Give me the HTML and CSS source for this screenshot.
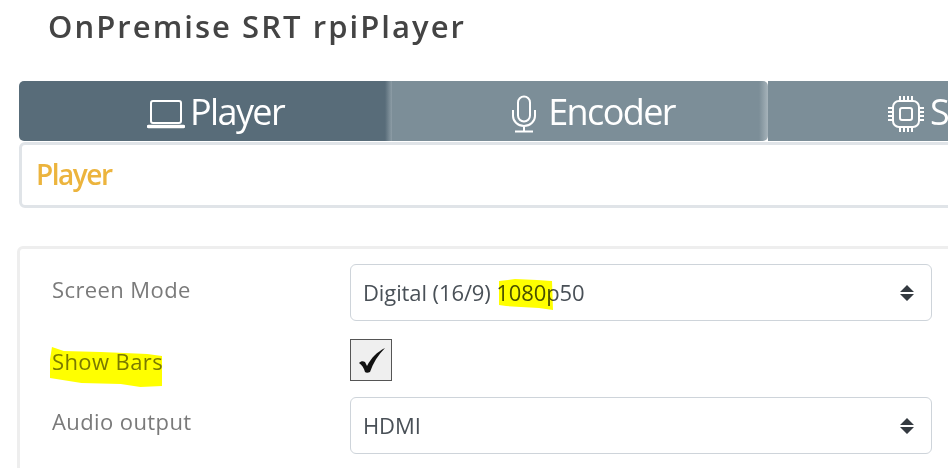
FILE: index.html

```html
<!DOCTYPE html>
<html lang="en">
<head>
    <meta charset="UTF-8">
    <title>OnPremise SRT rpiPlayer</title>
    <link rel="stylesheet" href="styles.css">
</head>
<body>
    <div class="page">
        <h1 class="title">OnPremise SRT rpiPlayer</h1>

        <nav class="tabs">
            <a class="tab tab-active">
                <svg class="tab-icon" viewBox="0 0 38 38" fill="none" stroke="#fff" stroke-width="2">
                    <rect x="4" y="6" width="30" height="22" rx="2"/>
                    <path d="M1.500 31.500h35" stroke-width="3.500" stroke-linecap="round"/>
                </svg>
                <span>Player</span>
            </a>
            <a class="tab tab-edge">
                <svg class="tab-icon" viewBox="-6 0 38 38" fill="none" stroke="#fff" stroke-width="2">
                    <rect x="7" y="1.500" width="12" height="25" rx="6"/>
                    <path d="M2 15v6a11 10 0 0 0 22 0v-6M13 31v5M4 36.500h18"/>
                </svg>
                <span>Encoder</span>
            </a>
            <a class="tab">
                <svg class="tab-icon" viewBox="0 0 38 38" fill="none" stroke="#fff" stroke-width="2">
                    <rect x="6" y="6" width="26" height="26" rx="6"/>
                    <rect x="13" y="13" width="12" height="12" rx="2"/>
                    <path d="M13 1v4M17 1v4M21 1v4M25 1v4M13 33v4M17 33v4M21 33v4M25 33v4M1 13h4M1 17h4M1 21h4M1 25h4M33 13h4M33 17h4M33 21h4M33 25h4"/>
                </svg>
                <span>S</span>
            </a>
        </nav>

        <div class="card card-head">
            <h2>Player</h2>
        </div>

        <div class="card card-form">
            <div class="row">
                <label class="row-label">Screen Mode</label>
                <div class="select">
                    Digital (16/9) 1080p50
                    <svg class="select-arrow" viewBox="0 0 14 16"><path d="M7 0l7 7H0zM7 16l7-7H0z" fill="#343a40"/></svg>
                    <svg class="marker marker-res" viewBox="0 0 55 32" preserveAspectRatio="none"><path d="M1 3l16-2 22 1 15 1 1 29-14-2-18-1-15-1-7-1z" fill="#ffff00"/></svg>
                </div>
            </div>
            <div class="row row-check">
                <label class="row-label">Show Bars</label>
                <div class="check">
                    <svg viewBox="0 0 28 28"><path d="M2 17c2-2 4-2 6-1l2 4C14 12 20 6 28 2c-7 7-12 15-15 24-2 1-4 1-5 0-1-4-3-7-6-9z" fill="#111"/></svg>
                </div>
                <svg class="marker marker-bars" viewBox="0 0 114 40" preserveAspectRatio="none"><path d="M2 0l12 4 38 1 47 2 15 2v30l-22 1-20-3-40-1-32-5-2-6z" fill="#ffff00"/></svg>
            </div>
            <div class="row">
                <label class="row-label">Audio output</label>
                <div class="select">
                    HDMI
                    <svg class="select-arrow" viewBox="0 0 14 16"><path d="M7 0l7 7H0zM7 16l7-7H0z" fill="#343a40"/></svg>
                </div>
            </div>
        </div>
    </div>
</body>
</html>
```

FILE: styles.css

```css
html, body {
    margin: 0;
    height: 468px;
    overflow: hidden;
    background: #fff;
}

.page {
    width: 1040px;
    height: 468px;
    overflow: hidden;
    padding: 0 0 0 19px;
    font-family: "Open Sans", sans-serif;
}

.title {
    margin: 0;
    padding: 5px 0 0 29px;
    height: 81px;
    box-sizing: border-box;
    font-size: 31px;
    line-height: 42px;
    font-weight: 600;
    letter-spacing: 2.05px;
    color: #444;
}

/* Tabs */
.tabs {
    display: flex;
    height: 60px;
}

.tab {
    flex: none;
    width: 375px;
    padding-left: 20px;
    display: flex;
    align-items: center;
    justify-content: center;
    gap: 5px;
    box-sizing: border-box;
    background: #7c8e98;
    color: #fff;
    font-size: 36px;
    letter-spacing: -1.6px;
}

.tab:last-child {
    justify-content: flex-start;
    padding-left: 119px;
}

.tab-active {
    width: 373px;
    background: linear-gradient(to left, #8d9da6 0, #586c79 7px);
    border-radius: 5px 0 0 5px;
}

.tab-edge {
    width: 376px;
    background: linear-gradient(to left, #a6b3ba 0, #7c8e98 9px);
    border-radius: 0 5px 5px 0;
}

.tab-icon {
    width: 38px;
    height: 38px;
    margin-top: 6px;
}

/* Cards */
.card {
    box-sizing: border-box;
    background: #fff;
    border-radius: 6px;
}

.card-head {
    height: 66px;
    margin-top: 1px;
    border: 3px solid #e0e4e8;
    padding-left: 14px;
}

.card-head h2 {
    margin: 0;
    font-size: 28px;
    line-height: 59px;
    font-weight: 600;
    letter-spacing: -1.5px;
    color: #ecb43d;
}

.card-form {
    margin-top: 38px;
    margin-left: -2px;
    height: 300px;
    border: 3px solid #eeeeee;
    padding: 15px 0 0 31px;
}

.row {
    position: relative;
    display: flex;
    align-items: center;
    height: 57px;
}

.row-check {
    height: 42px;
    margin: 18px 0 16px;
}

.row-label {
    width: 298px;
    margin-left: 1px;
    font-size: 22px;
    letter-spacing: 0.4px;
    color: #7a7a7a;
}

.row:first-child .row-label {
    margin-top: -8px;
}

.row:last-child .row-label {
    margin-top: -10px;
}

.row-check .row-label {
    margin-top: 2px;
}

.select {
    position: relative;
    box-sizing: border-box;
    width: 582px;
    height: 57px;
    padding-left: 12px;
    border: 1px solid #ced4da;
    border-radius: 6px;
    font-size: 22px;
    line-height: 54px;
    letter-spacing: -0.1px;
    color: #495057;
}

.select-arrow {
    position: absolute;
    top: 20px;
    right: 17px;
    width: 14px;
    height: 16px;
}

.check {
    box-sizing: border-box;
    width: 42px;
    height: 42px;
    padding: 6px;
    border: 1px solid #555;
    background: #efefef;
}

.check svg {
    display: block;
}

/* Marker pen strokes over the text */
.marker {
    position: absolute;
    mix-blend-mode: multiply;
}

.marker-res {
    left: 147px;
    top: 13px;
    width: 55px;
    height: 32px;
}

.marker-bars {
    left: -1px;
    top: 8px;
    width: 112px;
    height: 40px;
}
```
